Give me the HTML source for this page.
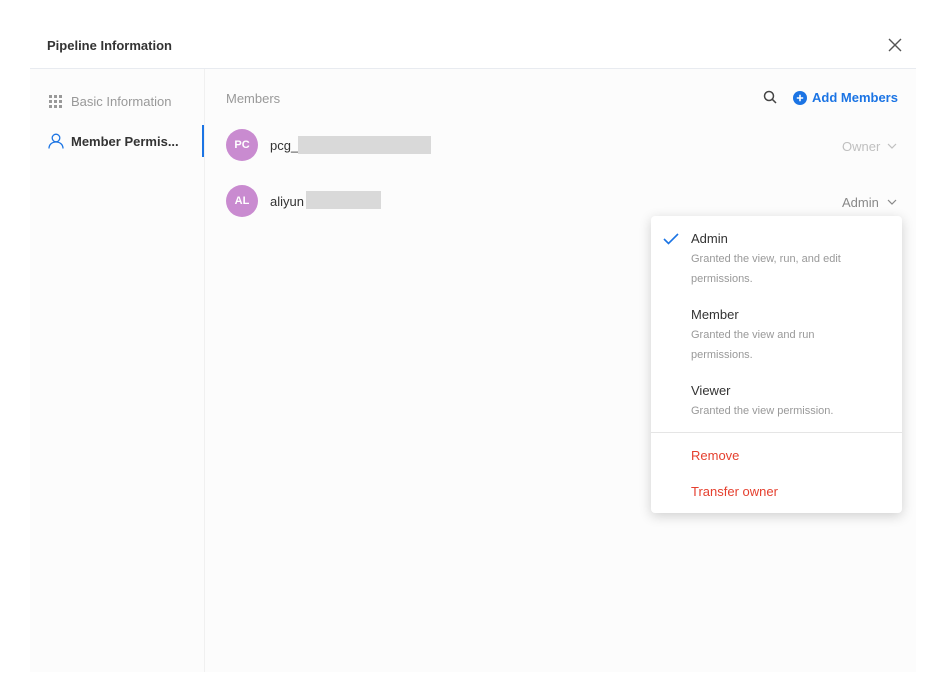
<!DOCTYPE html>
<html><head><meta charset="utf-8"><style>
*{margin:0;padding:0;box-sizing:border-box}
body{width:945px;height:698px;background:#fff;font-family:"Liberation Sans",sans-serif;position:relative;overflow:hidden;color:#333}
.modal{position:absolute;left:30px;top:20px;width:886px;height:652px;background:#fff}
.hdr{position:absolute;left:0;top:0;width:886px;height:49px;border-bottom:1px solid #e8ebf0;background:#fff}
.hdr .t{position:absolute;left:17px;top:18px;font-size:13px;font-weight:bold;color:#333}
.body{position:absolute;left:0;top:49px;width:886px;height:603px;background:#fcfcfc}
.side{position:absolute;left:0;top:0;width:175px;height:603px;border-right:1px solid #f0f0f0}
.abs{position:absolute}
.g{color:#999}
.av{position:absolute;width:32px;height:32px;border-radius:50%;background:#c98bd0;color:#fff;font-size:11px;font-weight:bold;text-align:center;line-height:32px}
.blk{position:absolute;background:#d9d9d9}
.menu{position:absolute;left:651px;top:216px;width:251px;height:297px;background:#fff;border-radius:4px;box-shadow:0 3px 12px rgba(0,0,0,.18)}
.mi{position:absolute;left:40px;font-size:13px;color:#333}
.md{position:absolute;left:40px;font-size:11px;color:#999;line-height:20px}
.red{color:#e5402f}
</style></head><body>
<div class="modal">
 <div class="hdr"><div class="t">Pipeline Information</div>
  <svg class="abs" style="left:858px;top:18px" width="14" height="14" viewBox="0 0 14 14"><path d="M1 1L13 13M13 1L1 13" stroke="#555" stroke-width="1.4"/></svg>
 </div>
 <div class="body">
  <div class="side">
   <svg class="abs" style="left:19px;top:26px" width="14" height="14" viewBox="0 0 14 14" fill="#999"><rect x="0" y="0" width="3" height="3"/><rect x="5" y="0" width="3" height="3"/><rect x="10" y="0" width="3" height="3"/><rect x="0" y="5" width="3" height="3"/><rect x="5" y="5" width="3" height="3"/><rect x="10" y="5" width="3" height="3"/><rect x="0" y="10" width="3" height="3"/><rect x="5" y="10" width="3" height="3"/><rect x="10" y="10" width="3" height="3"/></svg>
   <div class="abs g" style="left:41px;top:25px;font-size:13px">Basic Information</div>
   <svg class="abs" style="left:18px;top:64px" width="16" height="16" viewBox="0 0 16 16" fill="none" stroke="#1b74e4" stroke-width="1.3"><circle cx="8" cy="5" r="3.8"/><path d="M1 15.5c0-4 3-6.5 7-6.5s7 2.5 7 6.5"/></svg>
   <div class="abs" style="left:41px;top:65px;font-size:13px;font-weight:bold;color:#333">Member Permis...</div>
   <div class="abs" style="left:172px;top:56px;width:2px;height:32px;background:#1b74e4"></div>
  </div>
  <div class="abs g" style="left:196px;top:22px;font-size:13px">Members</div>
  <svg class="abs" style="left:733px;top:21px" width="14" height="14" viewBox="0 0 14 14" fill="none" stroke="#444" stroke-width="1.5"><circle cx="6" cy="6" r="4.5"/><path d="M9.3 9.3L13 13"/></svg>
  <svg class="abs" style="left:763px;top:22px" width="14" height="14" viewBox="0 0 14 14"><circle cx="7" cy="7" r="7" fill="#1b74e4"/><path d="M7 3.8v6.4M3.8 7h6.4" stroke="#fff" stroke-width="1.6"/></svg>
  <div class="abs" style="left:782px;top:21px;font-size:13px;font-weight:bold;color:#1b74e4">Add Members</div>
  <div class="av" style="left:196px;top:60px">PC</div>
  <div class="abs" style="left:240px;top:69px;font-size:13px">pcg_</div>
  <div class="blk" style="left:268px;top:67px;width:133px;height:18px"></div>
  <div class="abs" style="left:812px;top:70px;font-size:13px;color:#c0c0c0">Owner</div>
  <svg class="abs" style="left:857px;top:74px" width="10" height="6" viewBox="0 0 10 6"><path d="M1 1l4 4 4-4" stroke="#c0c0c0" fill="none" stroke-width="1.2"/></svg>
  <div class="av" style="left:196px;top:116px">AL</div>
  <div class="abs" style="left:240px;top:125px;font-size:13px">aliyun</div>
  <div class="blk" style="left:276px;top:122px;width:75px;height:18px"></div>
  <div class="abs" style="left:812px;top:126px;font-size:13px;color:#888">Admin</div>
  <svg class="abs" style="left:857px;top:130px" width="10" height="6" viewBox="0 0 10 6"><path d="M1 1l4 4 4-4" stroke="#888" fill="none" stroke-width="1.2"/></svg>
 </div>
</div>
<div class="menu">
 <svg class="abs" style="left:12px;top:17px" width="16" height="12" viewBox="0 0 16 12"><path d="M1 6l4.5 4.5L15 1" stroke="#1b74e4" fill="none" stroke-width="1.6"/></svg>
 <div class="mi" style="top:15px">Admin</div>
 <div class="md" style="top:33px">Granted the view, run, and edit<br>permissions.</div>
 <div class="mi" style="top:91px">Member</div>
 <div class="md" style="top:109px">Granted the view and run<br>permissions.</div>
 <div class="mi" style="top:167px">Viewer</div>
 <div class="md" style="top:185px">Granted the view permission.</div>
 <div class="abs" style="left:0;top:216px;width:251px;height:1px;background:#e5e5e5"></div>
 <div class="mi red" style="top:232px">Remove</div>
 <div class="mi red" style="top:268px">Transfer owner</div>
</div>
</body></html>
